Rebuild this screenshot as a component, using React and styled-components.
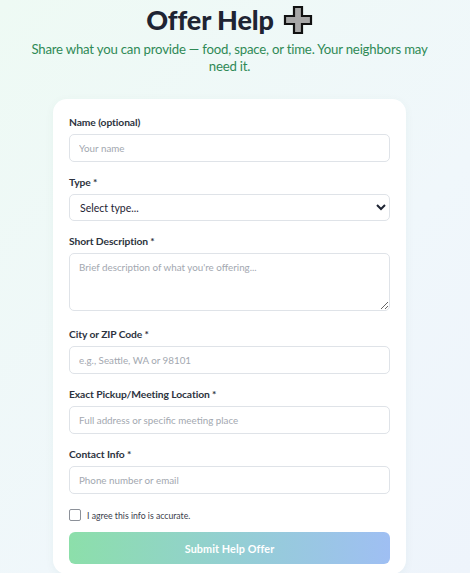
import styled, { createGlobalStyle } from 'styled-components'

const GlobalStyle = createGlobalStyle`
	html, body {
		margin: 0;
		padding: 0;
	}
	body {
		font-family: Lato, 'Open Sans', 'Noto Sans', sans-serif;
		background: linear-gradient(135deg, #eefaf4 0%, #f0f7fb 60%, #eef4fb 100%);
		min-height: 573px;
	}
`

const Page = styled.div`
	width: 459px;
	padding-top: 2px;
	display: flex;
	flex-direction: column;
	align-items: center;
`

const Title = styled.h1`
	margin: 0;
	display: flex;
	align-items: center;
	gap: 9px;
	font-size: 27px;
	font-weight: 900;
	color: #1e2433;
	line-height: 36px;
	letter-spacing: -0.1px;
`

const Subtitle = styled.p`
	margin: 3px 0 0;
	width: 408px;
	text-align: center;
	font-size: 13.2px;
	line-height: 17px;
	letter-spacing: -0.2px;
	color: #2f8a56;
`

const Card = styled.form`
	margin-top: 24px;
	width: 353px;
	box-sizing: border-box;
	padding: 17px 16px 10px;
	background: #ffffff;
	border-radius: 14px;
	box-shadow: 0 2px 10px rgba(40, 90, 80, 0.05);
	display: flex;
	flex-direction: column;
`

const Field = styled.div`
	display: flex;
	flex-direction: column;
	margin-bottom: 14px;
`

const Label = styled.label`
	font-size: 10.3px;
	font-weight: 700;
	color: #2d3340;
	line-height: 13px;
	letter-spacing: -0.1px;
	margin-bottom: 5px;
`

const inputBase = `
	box-sizing: border-box;
	width: 100%;
	border: 1px solid #dfe3e8;
	border-radius: 5px;
	font-family: Lato, 'Open Sans', sans-serif;
	font-size: 9.8px;
	color: #2d3340;
	background: #fff;
	outline: none;
	&::placeholder {
		color: #a3a8b0;
	}
`

const Input = styled.input`
	${inputBase}
	height: 28px;
	padding: 0 9px;
`

const Select = styled.select`
	${inputBase}
	height: 27px;
	padding: 0 6px;
	font-size: 10.5px;
	color: #1e2433;
`

const TextArea = styled.textarea`
	${inputBase}
	height: 58px;
	margin-bottom: 3px;
	padding: 7px 9px;
	resize: vertical;
`

const CheckRow = styled.div`
	display: flex;
	align-items: center;
	gap: 6px;
	margin: 1px 0 11px;
	font-size: 8.7px;
	color: #3a404c;
`

const Box = styled.span`
	width: 10px;
	height: 10px;
	border: 1px solid #8c9199;
	border-radius: 2px;
	background: #fff;
`

const Submit = styled.button`
	height: 32px;
	border: none;
	border-radius: 6px;
	background: linear-gradient(90deg, #8cdfaa 0%, #93cfd2 50%, #9fbff3 100%);
	color: #ffffff;
	font-family: Lato, 'Open Sans', sans-serif;
	font-size: 10.8px;
	font-weight: 700;
	letter-spacing: 0.1px;
`

const PlusIcon = () => (
	<svg width="30" height="30" viewBox="0 0 30 30">
		<path
			d="M11 2 H19 V11 H28 V19 H19 V28 H11 V19 H2 V11 H11 Z"
			fill="#a6a6a6"
			stroke="#111"
			strokeWidth="2.2"
			strokeLinejoin="miter"
		/>
	</svg>
)

const fields = [
	{ label: 'Exact Pickup/Meeting Location *', placeholder: 'Full address or specific meeting place' },
	{ label: 'Contact Info *', placeholder: 'Phone number or email' },
]

export default function App() {
	return (
		<>
			<GlobalStyle />
			<Page>
				<Title>
					Offer Help <PlusIcon />
				</Title>
				<Subtitle>Share what you can provide — food, space, or time. Your neighbors may need it.</Subtitle>
				<Card onSubmit={(e) => e.preventDefault()}>
					<Field>
						<Label>Name (optional)</Label>
						<Input placeholder="Your name" />
					</Field>
					<Field>
						<Label>Type *</Label>
						<Select defaultValue="">
							<option value="">Select type...</option>
							<option>Food</option>
							<option>Space</option>
							<option>Time</option>
						</Select>
					</Field>
					<Field>
						<Label>Short Description *</Label>
						<TextArea placeholder="Brief description of what you're offering..." />
					</Field>
					<Field>
						<Label>City or ZIP Code *</Label>
						<Input placeholder="e.g., Seattle, WA or 98101" />
					</Field>
					{fields.map((f) => (
						<Field key={f.label}>
							<Label>{f.label}</Label>
							<Input placeholder={f.placeholder} />
						</Field>
					))}
					<CheckRow>
						<Box />
						I agree this info is accurate.
					</CheckRow>
					<Submit type="submit">Submit Help Offer</Submit>
				</Card>
			</Page>
		</>
	)
}
